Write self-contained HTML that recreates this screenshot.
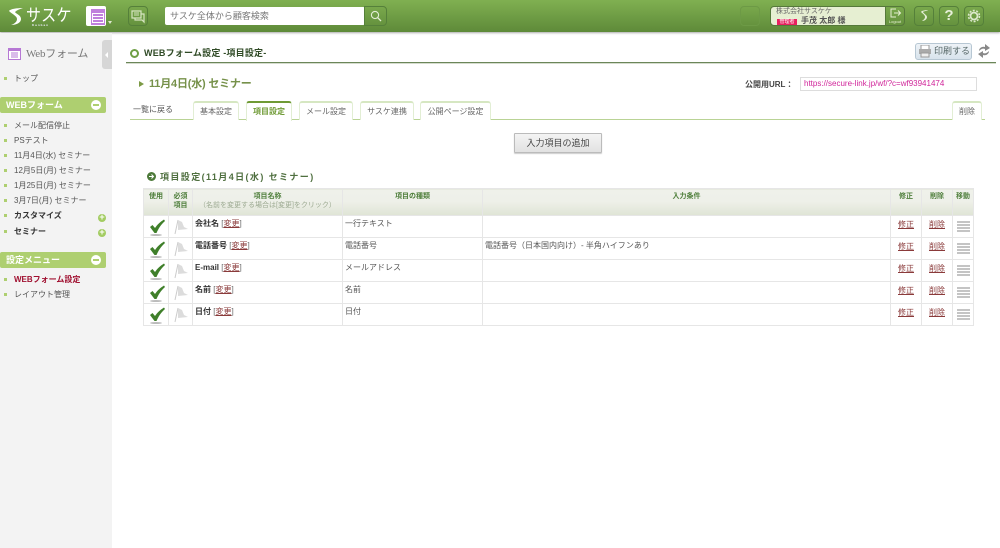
<!DOCTYPE html>
<html lang="ja"><head><meta charset="utf-8"><title>WEBフォーム設定</title>
<style>
*{box-sizing:border-box}
html,body{margin:0;padding:0;width:1000px;height:548px;overflow:hidden;background:#fff}
body{font-family:"Liberation Sans","Noto Sans CJK JP",sans-serif;font-size:8px;color:#444;position:relative}
.a{position:absolute;white-space:nowrap}
.hb{position:absolute;top:6px;width:20px;height:20px;border:1px solid #55803a;border-radius:4px;background:transparent}
.gb{position:absolute;left:0;width:106px;height:16px;background:#aecf70;border-radius:2px;color:#fff;font-weight:bold;font-size:9px;line-height:16px;padding-left:6px}
.gb i{position:absolute;right:5px;top:3px;width:10px;height:10px;border-radius:50%;background:#fff}
.gb i:after{content:"";position:absolute;left:2px;top:4px;width:6px;height:2px;background:#aecf70}
.m{position:absolute;left:14px;font-size:8px;line-height:10px;color:#555;white-space:nowrap}
.m:before{content:"";position:absolute;left:-10px;top:3px;width:3px;height:3px;background:#aecf70}
.pl{position:absolute;left:98px;width:8px;height:8px;border-radius:50%;background:#a3cc62}
.pl:after{content:"+";position:absolute;left:0;top:-2px;width:8px;text-align:center;color:#fff;font-size:9px;font-weight:bold;line-height:11px}
.tab{position:absolute;top:101px;height:19px;background:#fff;border:1px solid #e2eed4;border-top:2px solid #d6e7c2;border-bottom:0;border-radius:3px 3px 0 0;text-align:center;font-size:8px;line-height:18px;color:#666}
table{position:absolute;left:143px;top:188px;width:830px;height:136px;border-collapse:collapse;table-layout:fixed}
td,th{border:1px solid #e6e6e6;padding:0;font-size:8px;vertical-align:top;overflow:hidden}
th{height:27px;background:linear-gradient(#eff1ea 0,#eef0e9 45%,#dfe4d5 100%);color:#4f7f3c;line-height:9px;font-weight:bold;font-size:7px;padding-top:3px}
th small{display:block;font-size:7px;font-weight:normal;color:#9aa88f;line-height:9px}
td{height:21.8px;line-height:11px;padding:2px 1px 0 2px;color:#555}
td b{color:#333}
u{color:#8a3a3a}
.c{text-align:center;padding:0;position:relative}
.e{padding-top:3px;line-height:11px}
.l{padding-top:2px;line-height:11px}
.b i{display:block;width:13px;height:2px;background:#c4c4c4;margin:0 auto 1px}
.b{padding-top:5px!important}
svg{display:block}
</style></head><body>

<!-- header -->
<div class="a" style="left:0;top:0;width:1000px;height:32px;background:linear-gradient(#80b051,#5e8a39);box-shadow:0 1px 2px #aaa"></div>
<svg class="a" style="left:8px;top:7px" width="16" height="19" viewBox="0 0 16 19"><path d="M15 1C9 1 2 2 1 4c3 3 8 5 8 8 0 3-3 5-6 6 5 0 10-2 10-6 0-4-5-5-6-7 2-2 5-3 8-4z" fill="#fff"/></svg>
<div class="a" style="left:26px;top:5px;font-size:15px;line-height:20px;color:#fff;letter-spacing:.4px;transform:scale(1,1.15);transform-origin:left top">サスケ</div>
<div class="a" style="left:32px;top:23px;font-size:3px;line-height:4px;color:#eef;letter-spacing:1px;font-weight:bold">Kanban</div>
<div class="a" style="left:86px;top:6px;width:20px;height:20px;background:#fff;border-radius:2px"></div>
<div class="a" style="left:91px;top:9px;width:14px;height:16px;background:#c080dc"></div>
<div class="a" style="left:92px;top:13px;width:12px;height:10px;background:#fff"></div>
<div class="a" style="left:93px;top:14px;width:10px;height:2px;background:#c080dc"></div>
<div class="a" style="left:93px;top:17px;width:10px;height:2px;background:#c080dc"></div>
<div class="a" style="left:93px;top:20px;width:10px;height:2px;background:#c080dc"></div>
<div class="a" style="left:108px;top:21px;border:2px solid transparent;border-top:3px solid #dfe8d0"></div>
<div class="hb" style="left:128px"><svg width="18" height="18" viewBox="0 0 18 18"><path d="M3 4h9v7H5l-2 0zM6 11v2h7l2 2v-8h-3" fill="none" stroke="#d6e4c0" stroke-width="1.2"/><path d="M5 6h5M5 8h5" stroke="#d6e4c0"/></svg></div>
<div class="a" style="left:165px;top:7px;width:200px;height:18px;background:#fff;border-radius:2px;font-size:9px;line-height:18px;padding-left:5px;color:#777">サスケ全体から顧客検索</div>
<div class="a" style="left:364px;top:6px;width:23px;height:20px;border:1px solid #55803a;border-radius:0 4px 4px 0"><svg width="21" height="18" viewBox="0 0 21 18"><circle cx="10" cy="8" r="3.6" fill="none" stroke="#e4eed6" stroke-width="1.1"/><path d="M12.600 10.600l3.400 3.400" stroke="#e4eed6" stroke-width="1.3"/></svg></div>

<div class="hb" style="left:740px;border-color:#6d9a46"></div>
<div class="a" style="left:770px;top:6px;width:116px;height:20px;background:#e6efd2;border:1px solid #55793a;border-radius:4px 0 0 4px"></div>
<div class="a" style="left:776px;top:7px;font-size:7px;line-height:9px;color:#666">株式会社サスケケ</div>
<div class="a" style="left:777px;top:19px;width:20px;height:6px;background:#e8215f;color:#fff;font-size:5px;line-height:6px;text-align:center">管理者</div>
<div class="a" style="left:801px;top:16px;font-size:8px;line-height:10px;color:#555;font-weight:bold">手茂 太郎 様</div>
<div class="a" style="left:885px;top:6px;width:20px;height:20px;border:1px solid #55793a;border-radius:0 4px 4px 0"><svg width="18" height="12" viewBox="0 0 18 12"><path d="M10 2H5v8h5M8 6h6M12 3.500L14.500 6 12 8.500" fill="none" stroke="#e6efd2" stroke-width="1"/></svg></div>
<div class="a" style="left:886px;top:19px;width:18px;text-align:center;font-size:4px;line-height:5px;color:#e6efd2">Logout</div>
<div class="hb" style="left:914px"><svg width="18" height="18" viewBox="0 0 18 18"><path d="M13 3C10 3 6 4 6 5c2 2 4 3 4 5 0 2-2 3-3 4 3 0 5-2 5-4s-3-3-4-5c1-1 4-1 5-2z" fill="#e4eed6"/></svg></div>
<div class="hb" style="left:939px;color:#e8f0da;font-size:15px;font-weight:bold;line-height:18px;text-align:center">?</div>
<div class="hb" style="left:964px"><svg width="18" height="18" viewBox="0 0 18 18"><circle cx="9" cy="9" r="3.500" fill="none" stroke="#dce8cc" stroke-width="1.800"/><circle cx="9" cy="9" r="5.500" fill="none" stroke="#dce8cc" stroke-width="1.500" stroke-dasharray="2 1.500"/></svg></div>

<!-- sidebar -->
<div class="a" style="left:0;top:33px;width:112px;height:515px;background:#f3f3f3"></div>
<div class="a" style="left:102px;top:40px;width:10px;height:29px;background:#d6d6d6;border-radius:3px 0 0 3px"></div>
<div class="a" style="left:105px;top:52px;border:3px solid transparent;border-right:3px solid #fff;border-left:0"></div>
<svg class="a" style="left:8px;top:48px" width="13" height="13" viewBox="0 0 13 13"><rect x=".5" y=".5" width="12" height="11" fill="#fff" stroke="#b678d4"/><rect x="0" y="0" width="13" height="3" fill="#b678d4"/><path d="M3 5h7M3 7h7M3 9h7" stroke="#b678d4"/></svg>
<div class="a" style="left:26px;top:47px;font-size:11px;line-height:15px;color:#777;letter-spacing:-.2px;font-family:'Liberation Serif','Noto Sans CJK JP',serif">Webフォーム</div>
<div class="m" style="top:74px">トップ</div>
<div class="gb" style="top:97px">WEBフォーム<i></i></div>
<div class="m" style="top:121px">メール配信停止</div>
<div class="m" style="top:136px">PSテスト</div>
<div class="m" style="top:151px">11月4日(水) セミナー</div>
<div class="m" style="top:166px">12月5日(月) セミナー</div>
<div class="m" style="top:181px">1月25日(月) セミナー</div>
<div class="m" style="top:196px">3月7日(月) セミナー</div>
<div class="m" style="top:211px;font-weight:bold;color:#333">カスタマイズ</div><div class="pl" style="top:214px"></div>
<div class="m" style="top:227px;font-weight:bold;color:#333">セミナー</div><div class="pl" style="top:229px"></div>
<div class="gb" style="top:252px">設定メニュー<i></i></div>
<div class="m" style="top:275px;font-weight:bold;color:#a01030">WEBフォーム設定</div>
<div class="m" style="top:290px">レイアウト管理</div>

<!-- title bar -->
<div class="a" style="left:130px;top:49px;width:9px;height:9px;border-radius:50%;border:2.500px solid #6f9f45;background:#fff"></div>
<div class="a" style="left:144px;top:47px;font-size:9px;line-height:13px;font-weight:bold;color:#2f4a25;letter-spacing:.2px">WEBフォーム設定 -項目設定-</div>
<div class="a" style="left:126px;top:62px;width:870px;height:2px;border-top:1px solid #6b8659;border-bottom:1px solid #d5dccd"></div>
<div class="a" style="left:915px;top:43px;width:57px;height:17px;background:linear-gradient(#eef3f7,#d8e3ec);border:1px solid #b7c7d3;border-radius:3px;font-size:9px;line-height:15px;padding-left:18px;color:#566">印刷する</div>
<svg class="a" style="left:918px;top:45px" width="14" height="13" viewBox="0 0 14 13"><rect x="3" y="0" width="8" height="5" fill="#fff" stroke="#999"/><rect x="1" y="4" width="12" height="5" fill="#aaa"/><rect x="3" y="8" width="8" height="4" fill="#eee" stroke="#999"/></svg>
<svg class="a" style="left:977px;top:43px" width="14" height="16" viewBox="0 0 14 16"><path d="M2 8c0-3 3-5 6-4V1l5 4-5 3V6C6 5 4 6 2 8zM12 8c0 3-3 5-6 4v3l-5-4 5-3v2c2 1 4 0 6-2z" fill="#888"/></svg>

<div class="a" style="left:139px;top:81px;border:3px solid transparent;border-left:5px solid #7c9a45;border-right:0"></div>
<div class="a" style="left:149px;top:77px;font-size:11px;line-height:15px;font-weight:bold;color:#76914a;letter-spacing:-.2px">11月4日(水) セミナー</div>
<div class="a" style="left:745px;top:79px;font-size:8px;line-height:11px;font-weight:bold;color:#444">公開用URL：</div>
<div class="a" style="left:800px;top:77px;width:177px;height:14px;border:1px solid #ddd;font-size:8px;line-height:12px;padding-left:3px;color:#d0259a">https://secure-link.jp/wf/?c=wf93941474</div>

<!-- tabs -->
<div class="a" style="left:133px;top:104px;font-size:8px;line-height:11px;color:#555">一覧に戻る</div>
<div class="a" style="left:130px;top:119px;width:855px;height:1px;background:#b9d395"></div>
<div class="tab" style="left:193px;width:46px">基本設定</div>
<div class="tab" style="left:246px;width:46px;height:20px;border-top:2px solid #6f9a35;font-weight:bold;color:#6f9a35;z-index:2">項目設定</div>
<div class="tab" style="left:299px;width:54px">メール設定</div>
<div class="tab" style="left:360px;width:54px">サスケ連携</div>
<div class="tab" style="left:420px;width:71px">公開ページ設定</div>
<div class="tab" style="left:952px;width:30px">削除</div>

<!-- add button -->
<div class="a" style="left:514px;top:133px;width:88px;height:20px;background:linear-gradient(#f4f4f4,#e2e2e2);border:1px solid #bbb;border-radius:1px;font-size:9px;line-height:18px;text-align:center;color:#444;box-shadow:0 1px 1px #ccc">入力項目の追加</div>

<!-- section title -->
<svg class="a" style="left:147px;top:172px" width="9" height="9" viewBox="0 0 9 9"><circle cx="4.500" cy="4.500" r="4.500" fill="#4d7a3a"/><path d="M2 4.500h4M4.500 2.500l2 2-2 2" stroke="#fff" fill="none"/></svg>
<div class="a" style="left:160px;top:171px;font-size:9px;line-height:13px;font-weight:bold;color:#4f6f3f;letter-spacing:1.4px">項目設定(11月4日(水) セミナー)</div>

<!-- table -->
<table>
<colgroup><col style="width:25px"><col style="width:24px"><col style="width:150px"><col style="width:140px"><col style="width:408px"><col style="width:31px"><col style="width:31px"><col style="width:21px"></colgroup>
<tr><th>使用</th><th>必須<br>項目</th><th>項目名称<small>（名前を変更する場合は[変更]をクリック）</small></th><th>項目の種類</th><th>入力条件</th><th>修正</th><th>削除</th><th>移動</th></tr>
<tr><td class="c"><svg width="24" height="21" viewBox="0 0 24 21"><path d="M6 11l2.500-2 2.500 3c2.500-3.500 5-6 9-8.500l1 1.500c-4 3.500-6.500 7.500-8.500 12h-2z" fill="#3f7f2a"/><ellipse cx="12" cy="19" rx="6" ry="1" fill="#bbb"/></svg></td><td class="c"><svg width="23" height="21" viewBox="0 0 23 21"><path d="M9 4L6 18" stroke="#ccc"/><path d="M9 4l4 2 2 5 4 2-10 1z" fill="#dcdcdc"/></svg></td><td class="l"><b>会社名</b> <span style="color:#666">[<u>変更</u>]</span></td><td>一行テキスト</td><td></td><td class="c e"><u>修正</u></td><td class="c e"><u>削除</u></td><td class="c b"><i></i><i></i><i></i><i></i></td></tr>
<tr><td class="c"><svg width="24" height="21" viewBox="0 0 24 21"><path d="M6 11l2.500-2 2.500 3c2.500-3.500 5-6 9-8.500l1 1.500c-4 3.500-6.500 7.500-8.500 12h-2z" fill="#3f7f2a"/><ellipse cx="12" cy="19" rx="6" ry="1" fill="#bbb"/></svg></td><td class="c"><svg width="23" height="21" viewBox="0 0 23 21"><path d="M9 4L6 18" stroke="#ccc"/><path d="M9 4l4 2 2 5 4 2-10 1z" fill="#dcdcdc"/></svg></td><td class="l"><b>電話番号</b> <span style="color:#666">[<u>変更</u>]</span></td><td>電話番号</td><td>電話番号（日本国内向け）- 半角ハイフンあり</td><td class="c e"><u>修正</u></td><td class="c e"><u>削除</u></td><td class="c b"><i></i><i></i><i></i><i></i></td></tr>
<tr><td class="c"><svg width="24" height="21" viewBox="0 0 24 21"><path d="M6 11l2.500-2 2.500 3c2.500-3.500 5-6 9-8.500l1 1.500c-4 3.500-6.500 7.500-8.500 12h-2z" fill="#3f7f2a"/><ellipse cx="12" cy="19" rx="6" ry="1" fill="#bbb"/></svg></td><td class="c"><svg width="23" height="21" viewBox="0 0 23 21"><path d="M9 4L6 18" stroke="#ccc"/><path d="M9 4l4 2 2 5 4 2-10 1z" fill="#dcdcdc"/></svg></td><td class="l"><b>E-mail</b> <span style="color:#666">[<u>変更</u>]</span></td><td>メールアドレス</td><td></td><td class="c e"><u>修正</u></td><td class="c e"><u>削除</u></td><td class="c b"><i></i><i></i><i></i><i></i></td></tr>
<tr><td class="c"><svg width="24" height="21" viewBox="0 0 24 21"><path d="M6 11l2.500-2 2.500 3c2.500-3.500 5-6 9-8.500l1 1.500c-4 3.500-6.500 7.500-8.500 12h-2z" fill="#3f7f2a"/><ellipse cx="12" cy="19" rx="6" ry="1" fill="#bbb"/></svg></td><td class="c"><svg width="23" height="21" viewBox="0 0 23 21"><path d="M9 4L6 18" stroke="#ccc"/><path d="M9 4l4 2 2 5 4 2-10 1z" fill="#dcdcdc"/></svg></td><td class="l"><b>名前</b> <span style="color:#666">[<u>変更</u>]</span></td><td>名前</td><td></td><td class="c e"><u>修正</u></td><td class="c e"><u>削除</u></td><td class="c b"><i></i><i></i><i></i><i></i></td></tr>
<tr><td class="c"><svg width="24" height="21" viewBox="0 0 24 21"><path d="M6 11l2.500-2 2.500 3c2.500-3.500 5-6 9-8.500l1 1.500c-4 3.500-6.500 7.500-8.500 12h-2z" fill="#3f7f2a"/><ellipse cx="12" cy="19" rx="6" ry="1" fill="#bbb"/></svg></td><td class="c"><svg width="23" height="21" viewBox="0 0 23 21"><path d="M9 4L6 18" stroke="#ccc"/><path d="M9 4l4 2 2 5 4 2-10 1z" fill="#dcdcdc"/></svg></td><td class="l"><b>日付</b> <span style="color:#666">[<u>変更</u>]</span></td><td>日付</td><td></td><td class="c e"><u>修正</u></td><td class="c e"><u>削除</u></td><td class="c b"><i></i><i></i><i></i><i></i></td></tr>
</table>
</body></html>
